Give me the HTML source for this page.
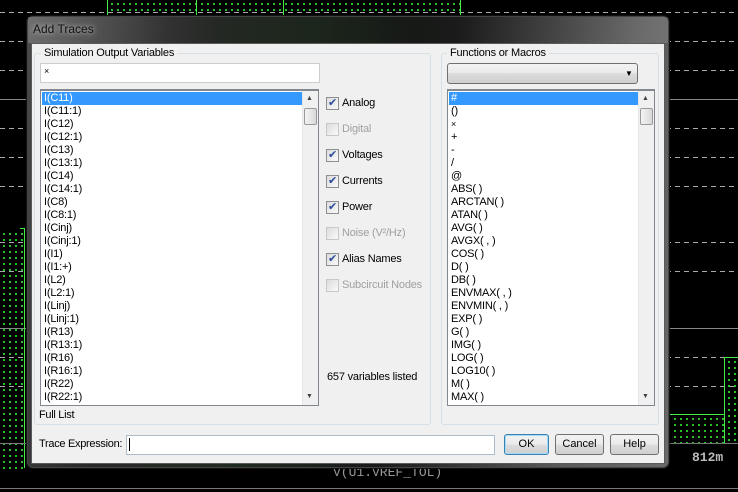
<!DOCTYPE html>
<html><head><meta charset="utf-8"><style>
*{margin:0;padding:0;box-sizing:border-box}
body{width:738px;height:492px;background:#000;position:relative;overflow:hidden;font-family:"Liberation Sans",sans-serif;font-size:11px;color:#000}
.a{position:absolute}
.dash{position:absolute;height:1px;background:repeating-linear-gradient(90deg,#aaa 0 5px,transparent 5px 9px)}
.dots{position:absolute;background-image:radial-gradient(#3f3 0.8px,transparent 1px);background-size:6px 6px;background-position:1px 1px}
.gl{position:absolute;background:#4e4}
.list div{height:13px;line-height:13px;padding-left:2px;white-space:nowrap;letter-spacing:-0.2px}
.sel{background:#3399ff;color:#fff}
.sb{position:absolute;background:#f0f0f0;border-left:1px solid #e6e6e6}
.cb{position:absolute;left:326px;width:13px;height:13px;border:1px solid #8e8f8f;background:linear-gradient(135deg,#dcdcdc,#fafafa)}
.cb.on::after{content:"✔";position:absolute;left:1px;top:-2px;font-size:11px;color:#2a4a9a}
.lb{position:absolute;left:342px;font-size:11px;letter-spacing:-0.2px}
.dis{color:#a0a0a0}
.dis2{border-color:#c8c8c8}
.btn{position:absolute;top:434px;height:21px;border:1px solid #707070;border-radius:3px;background:linear-gradient(#f2f2f2 0,#ebebeb 50%,#dddddd 51%,#cfcfcf);text-align:center;line-height:19px;font-size:11px}
</style></head><body>
<div class="dash" style="left:0;top:12px;width:738px"></div>
<div class="dash" style="left:0;top:41px;width:738px"></div>
<div class="dash" style="left:0;top:70px;width:738px"></div>
<div class="a" style="left:0;top:99px;width:738px;height:1px;background:#888"></div>
<div class="dash" style="left:0;top:128px;width:738px"></div>
<div class="dash" style="left:0;top:157px;width:738px"></div>
<div class="dash" style="left:0;top:186px;width:738px"></div>
<div class="dash" style="left:0;top:242px;width:738px"></div>
<div class="dash" style="left:0;top:271px;width:738px"></div>
<div class="a" style="left:0;top:328px;width:738px;height:1px;background:#888"></div>
<div class="dash" style="left:0;top:357px;width:738px"></div>
<div class="dash" style="left:0;top:386px;width:738px"></div>
<div class="dots" style="left:108px;top:0;width:352px;height:14px"></div>
<div class="gl" style="left:107px;top:0;width:1px;height:15px"></div>
<div class="gl" style="left:196px;top:0;width:1px;height:15px"></div>
<div class="gl" style="left:283px;top:0;width:1px;height:15px"></div>
<div class="gl" style="left:460px;top:0;width:1px;height:15px"></div>
<div class="gl" style="left:20px;top:228px;width:5px;height:1px"></div>
<div class="dots" style="left:0;top:230px;width:24px;height:240px"></div>
<div class="gl" style="left:24px;top:228px;width:1px;height:240px"></div>
<div class="dots" style="left:671px;top:415px;width:53px;height:28px"></div>
<div class="gl" style="left:668px;top:414px;width:56px;height:1px"></div>
<div class="dots" style="left:725px;top:358px;width:13px;height:85px"></div>
<div class="gl" style="left:724px;top:357px;width:14px;height:1px"></div>
<div class="gl" style="left:724px;top:357px;width:1px;height:86px"></div>
<div class="a" style="left:0;top:443px;width:738px;height:1px;background:#777"></div>
<div class="a" style="left:0;top:488px;width:738px;height:1px;background:#777"></div>
<div class="a" style="left:692px;top:450px;font-family:'Liberation Mono',monospace;font-size:13px;color:#bbb;font-weight:bold">812m</div>
<div class="a" style="left:333px;top:465px;font-family:'Liberation Mono',monospace;font-size:13px;color:#999">V(U1.VREF_TOL)</div>

<div class="a" style="left:27px;top:16px;width:642px;height:452px;border-radius:6px;border:1px solid #444;background:linear-gradient(100deg,#4a4a4a 0%,#262626 20%,#1f2a1f 40%,#1a1a1a 60%,#5a5a5a 85%,#6a6a6a 100%);box-shadow:0 0 0 1px #111"></div>
<div class="a" style="left:28px;top:17px;width:640px;height:26px;background:linear-gradient(90deg,rgba(255,255,255,.2),rgba(255,255,255,0) 30%,rgba(0,0,0,.2) 60%,rgba(255,255,255,.12))"></div>
<div class="a" style="left:33px;top:22px;font-size:12px;color:#111;text-shadow:0 0 5px #bbb,0 0 8px #999">Add Traces</div>
<div class="a" style="left:31px;top:43px;width:634px;height:421px;background:#f0f0f0;border:1px solid #5a5a5a"></div>

<div class="a" style="left:34px;top:53px;width:397px;height:372px;border:1px solid #d5dfe5;border-radius:3px"></div>
<div class="a" style="left:41px;top:47px;background:#f0f0f0;padding:0 3px;letter-spacing:-0.2px">Simulation Output Variables</div>
<div class="a" style="left:40px;top:63px;width:280px;height:20px;background:#fff;border:1px solid #ccc;padding:2px 3px;font-size:9px">×</div>
<div class="a" style="left:40px;top:89px;width:279px;height:317px;background:#fff;border:1px solid #828790;border-top:2px solid #828790;overflow:hidden">
<div class="list" style="position:absolute;left:1px;top:1px;width:261px">
<div class="sel">I(C11)</div><div>I(C11:1)</div><div>I(C12)</div><div>I(C12:1)</div><div>I(C13)</div><div>I(C13:1)</div><div>I(C14)</div><div>I(C14:1)</div><div>I(C8)</div><div>I(C8:1)</div><div>I(Cinj)</div><div>I(Cinj:1)</div><div>I(I1)</div><div>I(I1:+)</div><div>I(L2)</div><div>I(L2:1)</div><div>I(Linj)</div><div>I(Linj:1)</div><div>I(R13)</div><div>I(R13:1)</div><div>I(R16)</div><div>I(R16:1)</div><div>I(R22)</div><div>I(R22:1)</div>
</div>
<div class="sb" style="left:261px;top:0;width:16px;height:315px"></div>
<div class="a" style="left:265px;top:4px;font-size:7px;color:#444">▲</div>
<div class="a" style="left:263px;top:17px;width:13px;height:17px;border:1px solid #999;border-radius:2px;background:linear-gradient(90deg,#f4f4f4,#d8d8d8)"></div>
<div class="a" style="left:265px;top:302px;font-size:7px;color:#444">▼</div>
</div>
<div class="a" style="left:39px;top:409px;letter-spacing:-0.3px">Full List</div>

<div class="cb on" style="top:97px"></div><div class="lb" style="top:97px">Analog</div>
<div class="cb dis2" style="top:123px"></div><div class="lb dis" style="top:123px">Digital</div>
<div class="cb on" style="top:149px"></div><div class="lb" style="top:149px">Voltages</div>
<div class="cb on" style="top:175px"></div><div class="lb" style="top:175px">Currents</div>
<div class="cb on" style="top:201px"></div><div class="lb" style="top:201px">Power</div>
<div class="cb dis2" style="top:227px"></div><div class="lb dis" style="top:227px">Noise (V²/Hz)</div>
<div class="cb on" style="top:253px"></div><div class="lb" style="top:253px">Alias Names</div>
<div class="cb dis2" style="top:279px"></div><div class="lb dis" style="top:279px">Subcircuit Nodes</div>
<div class="a" style="left:327px;top:371px;letter-spacing:-0.2px">657 variables listed</div>

<div class="a" style="left:441px;top:53px;width:218px;height:372px;border:1px solid #d5dfe5;border-radius:3px"></div>
<div class="a" style="left:447px;top:47px;background:#f0f0f0;padding:0 3px;letter-spacing:-0.2px">Functions or Macros</div>
<div class="a" style="left:447px;top:63px;width:191px;height:21px;border:1px solid #707070;border-radius:3px;background:linear-gradient(#f2f2f2 0,#ebebeb 45%,#dcdcdc 50%,#cfcfcf)"></div>
<div class="a" style="left:625px;top:69px;font-size:8px">▼</div>
<div class="a" style="left:447px;top:89px;width:208px;height:317px;background:#fff;border:1px solid #828790;border-top:2px solid #828790;overflow:hidden">
<div class="list" style="position:absolute;left:1px;top:1px;width:189px">
<div class="sel">#</div><div>()</div><div style="font-size:9px">×</div><div>+</div><div>-</div><div>/</div><div>@</div><div>ABS( )</div><div>ARCTAN( )</div><div>ATAN( )</div><div>AVG( )</div><div>AVGX( , )</div><div>COS( )</div><div>D( )</div><div>DB( )</div><div>ENVMAX( , )</div><div>ENVMIN( , )</div><div>EXP( )</div><div>G( )</div><div>IMG( )</div><div>LOG( )</div><div>LOG10( )</div><div>M( )</div><div>MAX( )</div>
</div>
<div class="sb" style="left:190px;top:0;width:16px;height:315px"></div>
<div class="a" style="left:194px;top:4px;font-size:7px;color:#444">▲</div>
<div class="a" style="left:192px;top:17px;width:13px;height:17px;border:1px solid #999;border-radius:2px;background:linear-gradient(90deg,#f4f4f4,#d8d8d8)"></div>
<div class="a" style="left:194px;top:302px;font-size:7px;color:#444">▼</div>
</div>

<div class="a" style="left:39px;top:438px;letter-spacing:-0.3px">Trace Expression:</div>
<div class="a" style="left:126px;top:435px;width:369px;height:20px;background:#fff;border:1px solid #aabbcc"></div>
<div class="a" style="left:129px;top:438px;width:1px;height:13px;background:#000"></div>
<div class="btn" style="left:504px;width:45px;border-color:#3c7fb1;box-shadow:inset 0 0 0 1px #9fdcf7">OK</div>
<div class="btn" style="left:555px;width:49px">Cancel</div>
<div class="btn" style="left:610px;width:49px">Help</div>
</body></html>
